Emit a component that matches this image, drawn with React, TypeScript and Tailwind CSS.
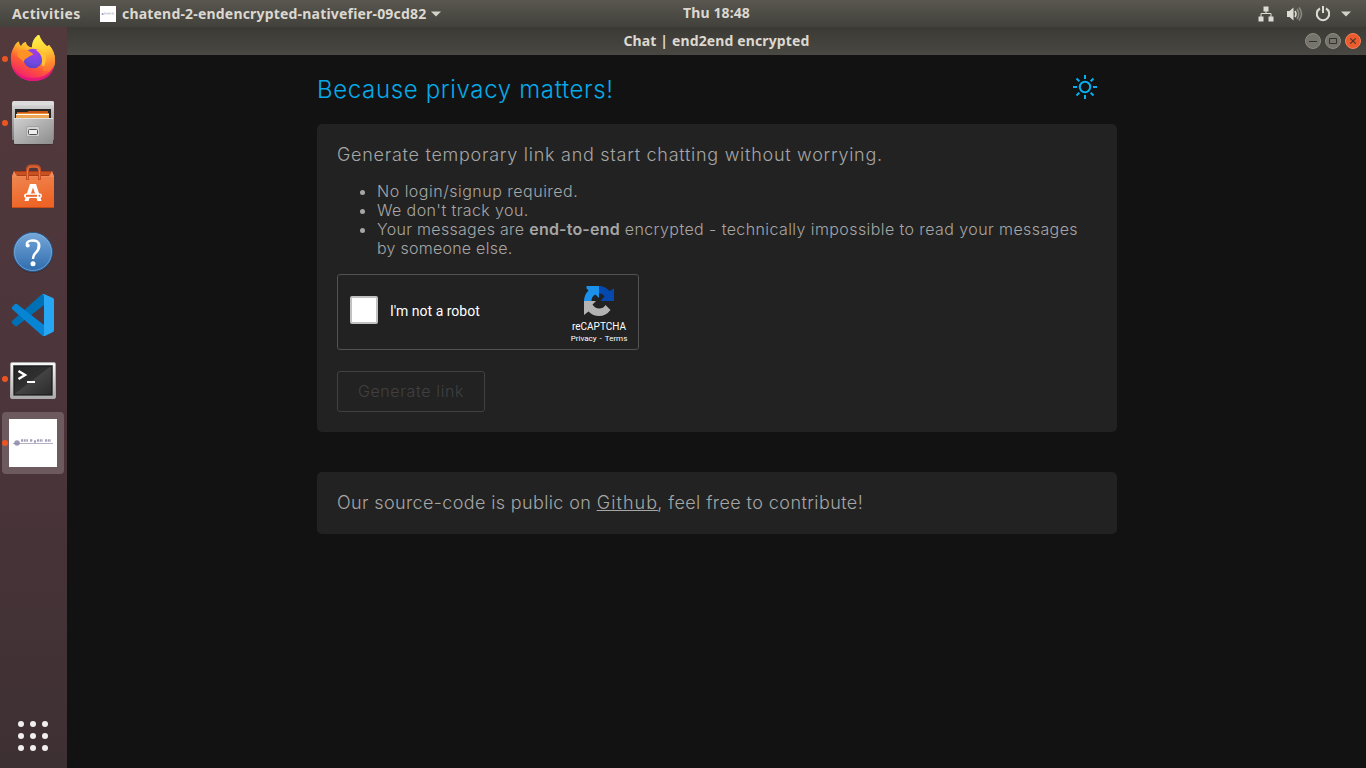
import React from "react";

function Firefox() {
  return (
    <svg width="48" height="48" viewBox="0 2 48 48">
      <defs>
        <linearGradient id="ffBody" x1="0.8" y1="0" x2="0.25" y2="1">
          <stop offset="0" stopColor="#fff44f" />
          <stop offset="0.35" stopColor="#ffb02a" />
          <stop offset="0.6" stopColor="#ff5a36" />
          <stop offset="1" stopColor="#f0147a" />
        </linearGradient>
        <radialGradient id="ffGlobe" cx="0.6" cy="0.2" r="0.9">
          <stop offset="0" stopColor="#a639e8" />
          <stop offset="0.6" stopColor="#6f4be0" />
          <stop offset="1" stopColor="#5a3fc0" />
        </radialGradient>
        <linearGradient id="ffEar" x1="0" y1="0" x2="0.2" y2="1">
          <stop offset="0" stopColor="#fff64f" />
          <stop offset="0.5" stopColor="#ffd234" />
          <stop offset="1" stopColor="#ff7a30" />
        </linearGradient>
      </defs>
      <path d="M5 14 Q7 9 10 8.500 Q10 11 12 13 Q14 9 17 9 Q17 12 21 14 L34 16 L40 12 Q46 18 46 28 A22 20 0 0 1 2 28 Q1 20 5 14Z" fill="url(#ffBody)" />
      <path d="M3 32 Q9 45 24 45 Q39 45 45 32 Q43 48 24 48 Q8 47 3 32Z" fill="#e01283" opacity=".8" />
      <path d="M23 16 Q22 7 30 1 Q32 8 38 13 Q39 14 40 12 Q47 20 46 30 Q43 38 34 38 Q38 25 34 19 Q30 15 23 16Z" fill="url(#ffEar)" />
      <circle cx="24" cy="25.500" r="9.800" fill="url(#ffGlobe)" />
      <path d="M27 17 Q33 15 36 21 Q38 27 35 33 Q33 34 33 30 Q34 22 27 17Z" fill="#ffc233" />
      <path d="M9 19 Q16 14 23 20 L24.500 21.500 Q20 23 18 25 Q15 26 15 29 Q11 25 8 23Z" fill="#ff9226" />
    </svg>
  );
}

function Files() {
  return (
    <svg width="48" height="48" viewBox="0 -1 48 48">
      <defs>
        <linearGradient id="cab" x1="0" y1="0" x2="0" y2="1"><stop offset="0" stopColor="#e2e2e2" /><stop offset="0.3" stopColor="#b9b9b9" /><stop offset="1" stopColor="#7d7d7d" /></linearGradient>
        <linearGradient id="drawer" x1="0" y1="0" x2="1" y2="1"><stop offset="0" stopColor="#d0d0d0" /><stop offset="1" stopColor="#8c8c8c" /></linearGradient>
      </defs>
      <path d="M4 3 Q4 1 6 1 H42 Q45 1 45 3 V40 H3 V3Z" fill="url(#cab)" />
      <rect x="3" y="1" width="42" height="4" rx="2" fill="#dcdcdc" />
      <rect x="6" y="9" width="36" height="10" fill="#252525" />
      <path d="M8 12 H18 L20 11 H39 V20 H8Z" fill="#c85818" />
      <rect x="8" y="13" width="32" height="1" fill="#ef8c2d" />
      <rect x="7" y="14" width="33" height="1" fill="#fff" />
      <rect x="7" y="15" width="33" height="3" fill="#eda653" />
      <rect x="5" y="18" width="39" height="26" rx="1" fill="url(#drawer)" />
      <rect x="5" y="18" width="39" height="1" fill="#e4e4e4" />
      <rect x="17.500" y="26.500" width="13" height="10" rx="1.500" fill="#d1d1d1" stroke="#a2a2a2" />
      <rect x="19.500" y="29.500" width="9" height="5" rx="1" fill="#eee" stroke="#4e4e4e" />
      <path d="M5 44.500H43" stroke="#3d3030" />
    </svg>
  );
}

function Software() {
  return (
    <svg width="48" height="48" viewBox="0 -1 48 48">
      <defs>
        <linearGradient id="bag" x1="0" y1="0" x2="0.3" y2="1"><stop offset="0" stopColor="#ef8650" /><stop offset="1" stopColor="#ee6426" /></linearGradient>
      </defs>
      <path d="M5 7 H43 L45 12 H3Z" fill="#a93d14" />
      <path d="M7 8H41V11H7Z" fill="#c85122" />
      <rect x="3" y="12" width="42" height="32" fill="url(#bag)" />
      <path d="M3 12L5 7L8 12H40L43 7L45 12V13H3Z" fill="#f08a58" />
      <path d="M3 43H45V44H3Z" fill="#c94b18" />
      <path d="M18.500 16V6Q18.500 2 22 2H27Q30.500 2 30.500 6V16" fill="none" stroke="#c85025" strokeWidth="3" />
      <path d="M18.500 15V7Q18.500 3 22 3H27Q30.500 3 30.500 7V15" fill="none" stroke="#e87545" />
      <path d="M15.500 37L21 20H27L32.500 37H28.500L24 23.500L19.500 37Z" fill="#fff" />
      <rect x="15" y="29.500" width="18" height="4.500" rx="2.200" fill="#fff" />
      <path d="M17 31.800H28" stroke="#ee6a30" strokeWidth="2" />
      <circle cx="30.500" cy="31.800" r="1" fill="#ee6a30" />
    </svg>
  );
}

function Help() {
  return (
    <svg width="48" height="48" viewBox="0 -1 48 48">
      <defs><linearGradient id="help" x1="0" y1="0" x2="0" y2="1"><stop offset="0" stopColor="#75a7da" /><stop offset="1" stopColor="#2f6cac" /></linearGradient></defs>
      <circle cx="24" cy="25" r="20" fill="#332931" opacity=".5" />
      <circle cx="24" cy="24" r="19.500" fill="url(#help)" stroke="#285a8e" />
      <circle cx="24" cy="24" r="18.500" fill="none" stroke="#86b5e2" opacity=".6" />
      <path d="M18.300 18 Q16.500 13.500 22 12.600 Q30.300 11.800 30.300 18 Q30.300 21.500 26.500 25 Q24.200 27 24 31" fill="none" stroke="#fff" strokeWidth="2.400" />
      <circle cx="18.700" cy="17.500" r="2" fill="#fff" />
      <path d="M28.500 14.500Q33 20 26 26Q29 20 28.500 14.500Z" fill="#fff" />
      <circle cx="24" cy="35.800" r="2.500" fill="#fff" />
    </svg>
  );
}

function Code() {
  return (
    <svg width="48" height="48" viewBox="0 0 48 48">
      <path d="M3 32L6 35Q7 35.500 8 35L35 14V3Q33.500 3 32 4L3 30Q2.500 31 3 32Z" fill="#0070b5" />
      <path d="M3 16L6 13Q7 12.500 8 13L35 34V45Q33.500 45 32 43.500L3 18Q2.500 17 3 16Z" fill="#0784d3" />
      <path d="M34 45Q35 44.500 35 43V5Q35 3.500 33 3.200L35 3L44 7Q45 7.500 45 9V39Q45 40.500 44 41L36 45Z" fill="#27a6f4" />
    </svg>
  );
}

function Terminal() {
  return (
    <svg width="48" height="48" viewBox="0 -1 48 48">
      <defs>
        <linearGradient id="termFrame" x1="0" y1="0" x2="0" y2="1"><stop offset="0" stopColor="#fafafa" /><stop offset="1" stopColor="#aaa" /></linearGradient>
        <linearGradient id="term" x1="0" y1="0" x2="1" y2="1"><stop offset="0" stopColor="#252525" /><stop offset=".48" stopColor="#303030" /><stop offset=".5" stopColor="#434343" /><stop offset="1" stopColor="#2b2b2b" /></linearGradient>
      </defs>
      <rect x="1.500" y="6.500" width="45" height="36" rx="1.500" fill="url(#termFrame)" stroke="#aaa" />
      <rect x="4" y="9" width="40" height="31" fill="#999" />
      <rect x="5" y="10" width="38" height="29" fill="url(#term)" stroke="#151515" />
      <path d="M9.500 15L16 19L9.500 23" fill="none" stroke="#fff" strokeWidth="2.500" />
      <path d="M18 26H26" stroke="#fff" strokeWidth="2" />
    </svg>
  );
}

function NativeApp({ size }: { size: number }) {
  return (
    <svg width={size} height={size} viewBox="0 0 48 48" className="shrink-0">
      <rect width="48" height="48" fill="#fff" />
      <path d="M4 24.500H44" stroke="#b3b0c6" strokeWidth="1" />
      <circle cx="8" cy="24" r="2.800" fill="#8b88aa" opacity=".85" />
      <path d="M12 21.500H19M21 21.500H24M25 22.500H27M28 21.500H34M36 21.500H42" stroke="#8582a3" strokeWidth="2.600" strokeDasharray="2 .7" opacity=".75" />
    </svg>
  );
}

const launchers = [
  { icon: <Firefox />, running: true, active: false },
  { icon: <Files />, running: true, active: false },
  { icon: <Software />, running: false, active: false },
  { icon: <Help />, running: false, active: false },
  { icon: <Code />, running: false, active: false },
  { icon: <Terminal />, running: true, active: false },
  { icon: <NativeApp size={48} />, running: true, active: true },
];

function TopBar() {
  return (
    <header className="grid h-[27px] shrink-0 grid-cols-[1fr_auto_1fr] items-center bg-linear-to-b from-[#595750] to-[#42413b] font-['Noto_Sans','Open_Sans',sans-serif] text-[14px] font-bold text-[#dcd8d0]">
      <div className="flex min-w-0 items-center whitespace-nowrap pl-3">
        <span className="w-[88px] shrink-0 tracking-[0.36px]">Activities</span>
        <NativeApp size={16} />
        <span className="ml-[6px] tracking-[0.19px]">chatend-2-endencrypted-nativefier-09cd82</span>
        <svg width="10" height="6" viewBox="0 0 10 6" className="ml-[5px]"><path d="M0 .5H10L5 5.500Z" fill="#d4d1ca" /></svg>
      </div>
      <span className="-translate-y-px pl-[67px] tracking-[0.1px]">Thu 18:48</span>
      <div className="flex items-center justify-end pr-[15px]">
        <svg width="16" height="16" viewBox="0 0 16 16"><path d="M5.500 .5h5v5h-5zM.500 10.500h5v5h-5zM10.500 10.500h5v5h-5z" fill="#dedbd4" /><path d="M8 5V8M3 11V7.500H13V11" fill="none" stroke="#dedbd4" /></svg>
        <svg width="17" height="16" viewBox="0 0 17 16" className="ml-3"><path d="M1 5H3.500L7.500 1.500V14.500L3.500 11H1Z" fill="#dedbd4" /><path d="M9 5Q11 8 9 11" stroke="#dedbd4" strokeWidth="1.600" fill="none" /><path d="M11 3Q14.500 8 11 13M13 1.500Q18 8 13 14.500" stroke="#8d8a82" strokeWidth="1.600" fill="none" /></svg>
        <svg width="16" height="16" viewBox="0 0 16 16" className="ml-3"><path d="M5 2.500A6.200 6.200 0 1 0 11 2.500" fill="none" stroke="#dedbd4" strokeWidth="2" /><path d="M8 0V7" stroke="#dedbd4" strokeWidth="2" /></svg>
        <svg width="10" height="6" viewBox="0 0 10 6" className="ml-[10px]"><path d="M0 .5H10L5 5.500Z" fill="#d4d1ca" /></svg>
      </div>
    </header>
  );
}

function Dock() {
  return (
    <nav className="flex w-[67px] shrink-0 flex-col justify-between bg-linear-to-b from-[#51393c] via-[#4c353b] to-[#3d3033]">
      <div className="flex flex-col gap-[2px] pl-[2px] pt-px">
        {launchers.map((item, i) => (
          <div key={i} className={item.active ? "relative flex h-[62px] w-[62px] items-center justify-center rounded-[4px] bg-[#6d5a5f]" : "relative flex h-[62px] w-[62px] items-center justify-center"}>
            {item.running && <span className="absolute left-0 top-1/2 h-[6px] w-[6px] -translate-y-1/2 rounded-full bg-[#ec5523]" />}
            {item.icon}
          </div>
        ))}
      </div>
      <div className="grid grid-cols-3 gap-[6px] self-start pb-[17px] pl-[18px]">
        {Array.from({ length: 9 }, (_, i) => <i key={i} className="h-[6px] w-[6px] rounded-full bg-[#f1f0ef]" />)}
      </div>
    </nav>
  );
}

function WindowTitle() {
  return (
    <div className="grid h-7 shrink-0 grid-cols-[1fr_auto_1fr] items-center bg-linear-to-b from-[#3b3a35] to-[#4a4842] font-['Noto_Sans','Open_Sans',sans-serif] text-[14px] font-bold text-[#dcd8d0]">
      <span />
      <h1 className="-translate-y-px tracking-[0.13px]">Chat | end2end encrypted</h1>
      <div className="flex justify-end gap-1 pr-[5px]">
        <svg width="16" height="16" viewBox="0 0 16 16"><circle cx="8" cy="8" r="7.500" fill="#76746d" stroke="#8e8b83" /><path d="M4 8.500H12" stroke="#33322e" /></svg>
        <svg width="16" height="16" viewBox="0 0 16 16"><circle cx="8" cy="8" r="7.500" fill="#76746d" stroke="#8e8b83" /><path d="M4.500 5.500H11.500V10.500H4.500Z" fill="none" stroke="#33322e" /></svg>
        <svg width="16" height="16" viewBox="0 0 16 16"><circle cx="8" cy="8" r="7.500" fill="#ec5b2b" stroke="#f0815d" /><path d="M5.300 5.300L10.700 10.700M10.700 5.300L5.300 10.700" stroke="#44372e" strokeWidth="1.200" /></svg>
      </div>
    </div>
  );
}

function Sun() {
  return (
    <svg width="24" height="24" viewBox="0 0 24 24" fill="none" stroke="#04b0f0" strokeWidth="2">
      <circle cx="12" cy="12" r="5.200" />
      <path d="M12 0V4M12 20V24M0 12H4M20 12H24M3.500 3.500L6.300 6.300M17.700 17.700L20.500 20.500M3.500 20.500L6.300 17.700M17.700 6.300L20.500 3.500" />
    </svg>
  );
}

function Captcha() {
  return (
    <div className="flex h-[76px] w-[302px] rounded-[3px] border border-[#525252] bg-[#222] font-[Roboto,sans-serif] font-normal">
      <span className="ml-3 mt-[21px] h-7 w-7 shrink-0 rounded-[2px] border-2 border-[#c1c1c1] bg-white" />
      <span className="ml-3 mt-[26px] w-[180px] text-[14px] leading-5 text-white">I'm not a robot</span>
      <div className="flex w-[58px] shrink-0 flex-col items-center pt-[10px] text-white">
        <svg width="32" height="32" viewBox="0 0 32 32">
          <path d="M16 1V13L12.500 9.500Q8.500 11 8.500 16H1Q1 10 5.500 5.500L3.500 3.500V1Z" fill="#1c91eb" />
          <path d="M16 1Q22 1 26.500 6L31 3.500V16H17.500L21.500 11.500Q20 8.500 16 8.500Z" fill="#0649ae" />
          <path d="M1 16H13L9.500 19.500Q12 23.500 16 23.500Q20.500 23.500 22.500 20L27.500 25Q23 31 16 31Q10 31 5.500 26.500L1 30Z" fill="#b3b3b3" />
        </svg>
        <span className="mt-1 text-[10px] leading-[12px]">reCAPTCHA</span>
        <span className="mt-[1px] whitespace-nowrap text-[8px] leading-[10px]">Privacy<span className="px-[3px]">-</span>Terms</span>
      </div>
    </div>
  );
}

export default function App() {
  return (
    <div className="flex h-screen flex-col overflow-hidden bg-[#121212]">
      <TopBar />
      <div className="flex min-h-0 flex-1">
        <Dock />
        <div className="flex min-w-0 flex-1 flex-col">
          <WindowTitle />
          <main className="ml-[250px] w-[800px] font-[Inter,sans-serif] font-light text-[#a6a6a6]">
            <div className="flex h-[69px] items-start justify-between pr-5 pt-5">
              <h2 className="text-[24px] leading-[30px] tracking-[0.65px] text-[#04aae9]">Because privacy matters!</h2>
              <Sun />
            </div>
            <section className="h-[308px] rounded-[5px] bg-[#222] px-5 pt-5">
              <p className="text-[18px] leading-[22px] tracking-[0.73px]">Generate temporary link and start chatting without worrying.</p>
              <ul className="mt-4 list-disc pl-10 text-[16px] leading-[19px]">
                <li className="tracking-[0.5px]">No login/signup required.</li>
                <li className="tracking-[0.4px]">We don't track you.</li>
                <li>
                  <span className="whitespace-nowrap tracking-[0.41px]"><span className="tracking-[0.3px]">Your messages are </span><b className="font-semibold tracking-[0.2px]">end-to-end</b> encrypted - technically impossible to read your messages</span>
                  <br /><span className="tracking-[0.25px]">by someone else.</span>
                </li>
              </ul>
              <div className="mt-4"><Captcha /></div>
              <button disabled className="mt-[21px] h-[41px] w-[148px] whitespace-nowrap rounded-[3px] border border-[#404040] pb-[2px] text-[16px] tracking-[0.62px] text-[#404040]">Generate link</button>
            </section>
            <section className="mt-10 h-[62px] rounded-[5px] bg-[#222] px-5 pt-5 text-[18px] leading-[22px] tracking-[0.42px]">
              <span className="tracking-[0.37px]">Our source-code is public on </span><a className="tracking-[1.1px] underline">Github</a><span className="-ml-px">, feel free to contribute!</span>
            </section>
          </main>
        </div>
      </div>
    </div>
  );
}
